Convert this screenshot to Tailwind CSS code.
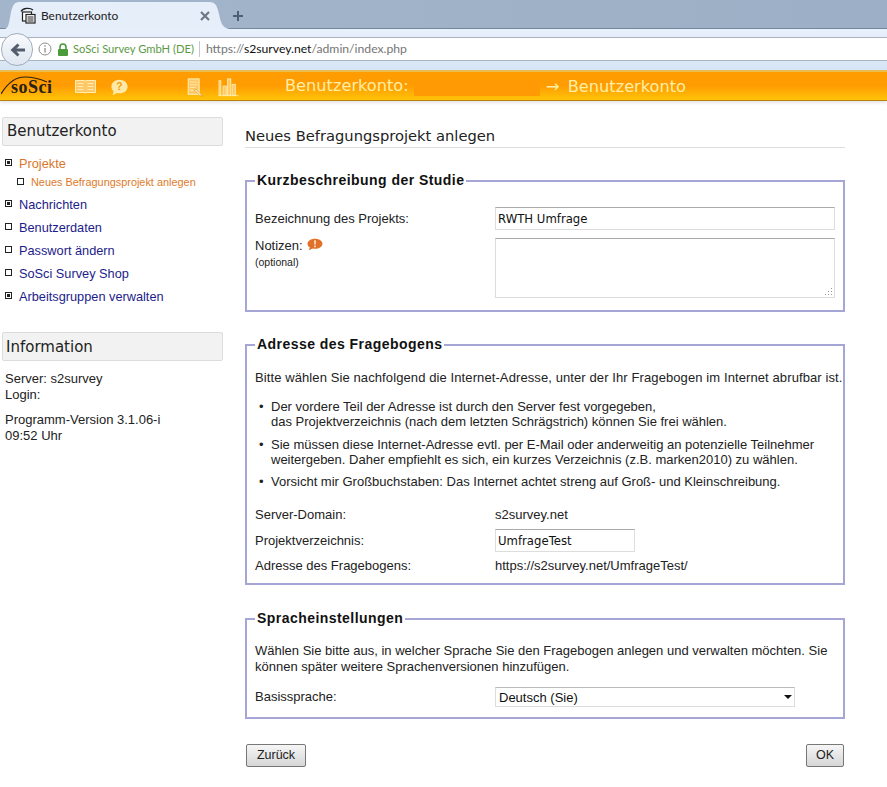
<!DOCTYPE html>
<html lang="de">
<head>
<meta charset="UTF-8">
<title>Benutzerkonto</title>
<script src="https://cdn.jsdelivr.net/npm/@tailwindcss/browser@4"></script>
</head>
<body class="bg-white font-['Liberation_Sans',sans-serif] text-[13px] text-[#222] w-[887px] h-[787px] overflow-hidden">

<!-- browser chrome -->
<div class="h-[29px] bg-gradient-to-r from-[#a3b5ca] via-[#9fb2c8] to-[#9cafc6] border-b border-[#74859c] flex items-end pl-[8px]">
  <div class="relative w-[214px] h-[27px] flex items-center pl-[12px] pr-[12px] -mb-px">
    <svg class="absolute left-[-4px] top-0 w-[226px] h-[27px]" viewBox="0 0 226 27"><path d="M0 27C5 27 5 20 7 10 9 2 11 0 16 0H205C212 0 213 4 215 12 217 22 219 26 226 27Z" fill="#e6eefa"/></svg>
    <svg class="relative w-[17px] h-[17px] shrink-0" viewBox="0 0 17 17" fill="none" stroke="#222" stroke-width="1.2"><path d="M1 4.500C3 .8 10 .5 13 3"/><rect x="2.500" y="5" width="9" height="9" fill="#fff"/><rect x="6" y="7.500" width="9" height="8.500" fill="#fff"/><path d="M7.500 10h6M7.500 12h6M7.500 14h6"/></svg>
    <span class="relative ml-[4px] font-['Lato',sans-serif] text-[11.900px] text-[#222] flex-1">Benutzerkonto</span>
    <svg class="relative w-[10px] h-[10px]" viewBox="0 0 10 10" stroke="#6d7785" stroke-width="2.2"><path d="M1 1l8 8M9 1l-8 8"/></svg>
  </div>
  <svg class="w-[12px] h-[12px] ml-[10px] mb-[6px]" viewBox="0 0 12 12" stroke="#4d5f78" stroke-width="2"><path d="M6 1v10M1 6h10"/></svg>
</div>
<div class="relative h-[41px] bg-gradient-to-b from-[#e8f0fb] to-[#d6e5f5] flex flex-col justify-center">
  <div class="h-[24px] bg-white border-y border-[#a9b3c0] flex items-center pl-[38px] font-['Lato',sans-serif] text-[12.200px] mt-[-1px]">
    <svg class="w-[14px] h-[14px] shrink-0" viewBox="0 0 14 14" fill="none" stroke="#8f8f8f"><circle cx="7" cy="7" r="6"/><path d="M7 6v4.5M7 3.2v1.6" stroke-width="1.3"/></svg>
    <svg class="w-[12px] h-[13px] ml-[5px] shrink-0" viewBox="0 0 12 13"><path d="M3 6V4a3 3 0 016 0v2" fill="none" stroke="#4c9a3a" stroke-width="1.6"/><rect x="1" y="6" width="10" height="7" rx="1" fill="#4c9a3a"/></svg>
    <span class="ml-[4px] text-[11.200px] text-[#5a9a46] whitespace-nowrap">SoSci Survey GmbH (DE)</span>
    <span class="ml-[5px] w-px h-[16px] bg-[#c4c9d0]"></span>
    <span class="ml-[6px] text-[#757575]">https://<span class="text-[#111]">s2survey.net</span>/admin/index.php</span>
  </div>
  <div class="absolute left-[1px] top-[4px] w-[32px] h-[33px] rounded-full bg-gradient-to-b from-[#f8fafd] to-[#dfe7f1] border border-[#a3aebc] flex items-center justify-center">
    <svg class="w-[15px] h-[14px]" viewBox="0 0 15 14" fill="#525e6e"><path d="M7.5 0.5L9.5 2.5 6.5 5.5H15v3H6.5l3 3-2 2L0.5 7z"/></svg>
  </div>
</div>

<!-- orange header -->
<div class="h-[31px] border-t-2 border-t-[#e9bd4f] border-b border-b-[#b97f10] bg-gradient-to-b from-[#ff9c02] from-50% to-[#ffc408] flex items-center relative shadow-[0_2px_3px_#0000001a]">
  <svg class="absolute left-[1px] top-[2px] w-[54px] h-[24px]" viewBox="0 0 54 24" fill="none" stroke="#2a2015" stroke-width="1.2"><path d="M0 20C6 10 14 3 24 3c8 0 15 2 22 5"/></svg>
  <span class="absolute left-[11px] top-[5px] font-['Liberation_Serif',serif] font-bold text-[18px] leading-[20px] text-[#2a2015] tracking-[0.5px]">soSci</span>
  <svg class="absolute left-[75px] top-[8px] w-[21px] h-[14px]" viewBox="0 0 21 14" fill="#ffc766" stroke="#ffeeb0" stroke-width="1"><path d="M.5.5h9.500l.5 1 .5-1h9.500v12h-9.500l-.5 1-.5-1H.5z"/><path d="M2.500 3.500h6M2.500 6.500h6M2.500 9.500h6M12.500 3.500h6M12.500 6.500h6M12.500 9.500h6" stroke-width="1"/></svg>
  <svg class="absolute left-[110px] top-[7px] w-[19px] h-[17px]" viewBox="0 0 21 20"><path d="M10.500 1C5 1 1 4.500 1 9c0 2.200 1 4 2.500 5.300L2.500 19l5-2.600c1 .3 2 .4 3 .4 5.500 0 9.500-3.500 9.500-7.800S16 1 10.500 1z" fill="#ffe9a8"/><text x="10.500" y="13.500" font-family="Liberation Sans" font-weight="700" font-size="12" text-anchor="middle" fill="#f59c0a">?</text></svg>
  <svg class="absolute left-[187px] top-[6px] w-[17px] h-[19px]" viewBox="0 0 18 21" fill="none"><rect x="1" y="1" width="12" height="17" fill="#ffc766" stroke="#ffeeb0" stroke-width="1.200"/><path d="M3 4.500h8M3 7.500h8M3 10.500h6M3 13.500h4" stroke="#ffeeb0"/><path d="M9 12l6 6 2 2-3-.5-6-6z" fill="#fff3c9" stroke="#c9861a" stroke-width=".6"/></svg>
  <svg class="absolute left-[218px] top-[6px] w-[21px] h-[19px]" viewBox="0 0 22 21" fill="#ffc766" stroke="#ffeeb0" stroke-width="1"><rect x=".5" y="3" width="2" height="16"/><rect x="5" y="9" width="3.500" height="10"/><rect x="10" y="1" width="3.500" height="18"/><rect x="15" y="7" width="3.500" height="12"/><path d="M0 19.500h22"/></svg>
  <span class="ml-[285px] mt-[1px] font-['DejaVu_Sans',sans-serif] text-[16.200px] text-[#ffefa6] whitespace-nowrap">Benutzerkonto:</span>
  <span class="absolute left-[414px] top-[8px] w-[126px] h-[16px] bg-[#ff9a05]"></span>
  <span class="absolute left-[546px] top-[3px] font-['DejaVu_Sans',sans-serif] text-[16.200px] text-[#ffefa6] whitespace-nowrap [word-spacing:3px]">→ Benutzerkonto</span>
</div>

<div class="flex items-start">
  <!-- sidebar -->
  <aside class="w-[245px] shrink-0 pl-[2px] pt-[16px]">
    <div class="w-[221px] h-[29px] bg-[#f2f2f2] border border-[#dcdcdc] rounded-[2px] pl-[4px] flex items-center font-['DejaVu_Sans',sans-serif] text-[15px] text-[#222]">Benutzerkonto</div>
    <ul class="mt-[6px] text-[12.750px]">
      <li class="h-[23px] flex items-center pl-[3px] text-[#d9762c]"><span class="w-[7px] h-[7px] border border-[#222] relative mr-[7px] mb-[2px] bg-[linear-gradient(#222,#222)] bg-[length:3px_3px] bg-center bg-no-repeat"></span>Projekte</li>
      <li class="h-[14px] flex items-center pl-[15px] text-[10.900px] text-[#e07a2a] mb-[4px]"><span class="w-[7px] h-[7px] border border-[#222] mr-[7px] mb-[1px]"></span>Neues Befragungsprojekt anlegen</li>
      <li class="h-[23px] flex items-center pl-[3px] text-[#1c1c8a]"><span class="w-[7px] h-[7px] border border-[#222] mr-[7px] mb-[2px] bg-[linear-gradient(#222,#222)] bg-[length:3px_3px] bg-center bg-no-repeat"></span>Nachrichten</li>
      <li class="h-[23px] flex items-center pl-[3px] text-[#1c1c8a]"><span class="w-[7px] h-[7px] border border-[#222] mr-[7px] mb-[2px]"></span>Benutzerdaten</li>
      <li class="h-[23px] flex items-center pl-[3px] text-[#1c1c8a]"><span class="w-[7px] h-[7px] border border-[#222] mr-[7px] mb-[2px]"></span>Passwort ändern</li>
      <li class="h-[23px] flex items-center pl-[3px] text-[#1c1c8a]"><span class="w-[7px] h-[7px] border border-[#222] mr-[7px] mb-[2px]"></span>SoSci Survey Shop</li>
      <li class="h-[23px] flex items-center pl-[3px] text-[#1c1c8a]"><span class="w-[7px] h-[7px] border border-[#222] mr-[7px] mb-[2px] bg-[linear-gradient(#222,#222)] bg-[length:3px_3px] bg-center bg-no-repeat"></span>Arbeitsgruppen verwalten</li>
    </ul>
    <div class="mt-[24px] w-[221px] h-[29px] bg-[#f2f2f2] border border-[#dcdcdc] rounded-[2px] pl-[3px] pt-[1px] flex items-center font-['DejaVu_Sans',sans-serif] text-[15px] text-[#222]">Information</div>
    <div class="mt-[10px] pl-[3px] leading-[15.500px]">
      <p>Server: s2survey</p>
      <p>Login:</p>
      <p class="mt-[10px]">Programm-Version 3.1.06-i</p>
      <p>09:52 Uhr</p>
    </div>
  </aside>

  <!-- main -->
  <main class="w-[600px]">
    <h1 class="mt-[26px] h-[21px] border-b border-[#dddddd] font-['DejaVu_Sans',sans-serif] text-[14.700px] leading-[17px] text-[#222]">Neues Befragungsprojekt anlegen</h1>

    <fieldset class="mt-[25px] h-[139px] border-2 border-[#a5a5d6] px-[8px] pb-0 min-w-0">
      <legend class="font-bold text-[14px] tracking-[0.45px] text-[#111] leading-[15px] px-[2px]">Kurzbeschreibung der Studie</legend>
      <div class="mt-[19px] flex items-center h-[23px]">
        <label class="w-[240px]">Bezeichnung des Projekts:</label>
        <input class="w-[340px] h-[23px] border border-[#ddd] border-t-[#aaa] px-[2px] font-['DejaVu_Sans',sans-serif] text-[11.700px] text-[#111]" value="RWTH Umfrage">
      </div>
      <div class="mt-[8px] flex items-start">
        <div class="w-[240px]">
          <label class="flex items-center gap-[4px] h-[16px]">Notizen:
            <svg class="w-[16px] h-[13px] mb-[4px]" viewBox="0 0 15 12"><path d="M7.500.5C3.500.5.500 2.500.500 5.200c0 1.500.8 2.700 2.200 3.500L1.500 11.500 5.500 9.700c.6.100 1.300.2 2 .2 4 0 7-2 7-4.700S11.500.5 7.500.5z" fill="#e0702a"/><path d="M7.500 2v4M7.500 7v1.500" stroke="#ffe6c9" stroke-width="1.500"/></svg>
          </label>
          <p class="text-[10.500px] leading-[12px] mt-[2px]">(optional)</p>
        </div>
        <div class="relative">
          <textarea class="w-[340px] h-[60px] border border-[#ddd] border-t-[#aaa] block resize-none"></textarea>
          <svg class="absolute right-[2px] bottom-[2px] w-[8px] h-[8px]" viewBox="0 0 8 8" fill="#999"><rect x="6" y="0" width="1" height="1"/><rect x="3" y="3" width="1" height="1"/><rect x="6" y="3" width="1" height="1"/><rect x="0" y="6" width="1" height="1"/><rect x="3" y="6" width="1" height="1"/><rect x="6" y="6" width="1" height="1"/></svg>
        </div>
      </div>
    </fieldset>

    <fieldset class="mt-[25px] h-[248px] border-2 border-[#a5a5d6] px-[8px] min-w-0">
      <legend class="font-bold text-[14px] tracking-[0.45px] text-[#111] leading-[15px] px-[2px]">Adresse des Fragebogens</legend>
      <p class="mt-[19px] leading-[14px] tracking-[0.1px] whitespace-nowrap">Bitte wählen Sie nachfolgend die Internet-Adresse, unter der Ihr Fragebogen im Internet abrufbar ist.</p>
      <ul class="mt-[14px] leading-[15px]">
        <li class="flex"><span class="w-[16px] pl-[4px]">•</span><span>Der vordere Teil der Adresse ist durch den Server fest vorgegeben,<br>das Projektverzeichnis (nach dem letzten Schrägstrich) können Sie frei wählen.</span></li>
        <li class="flex mt-[8px]"><span class="w-[16px] pl-[4px]">•</span><span>Sie müssen diese Internet-Adresse evtl. per E-Mail oder anderweitig an potenzielle Teilnehmer<br>weitergeben. Daher empfiehlt es sich, ein kurzes Verzeichnis (z.B. marken2010) zu wählen.</span></li>
        <li class="flex mt-[7px]"><span class="w-[16px] pl-[4px]">•</span><span>Vorsicht mir Großbuchstaben: Das Internet achtet streng auf Groß- und Kleinschreibung.</span></li>
      </ul>
      <div class="mt-[19px] flex items-center h-[14px]"><span class="w-[240px]">Server-Domain:</span><span>s2survey.net</span></div>
      <div class="mt-[7px] flex items-center h-[23px]"><label class="w-[240px]">Projektverzeichnis:</label><input class="w-[140px] h-[23px] border border-[#ddd] border-t-[#aaa] px-[2px] font-['DejaVu_Sans',sans-serif] text-[11.700px] text-[#111]" value="UmfrageTest"></div>
      <div class="mt-[7px] flex items-center h-[14px]"><span class="w-[240px]">Adresse des Fragebogens:</span><span>https://s2survey.net/UmfrageTest/</span></div>
    </fieldset>

    <fieldset class="mt-[26px] h-[108px] border-2 border-[#a5a5d6] px-[8px] min-w-0">
      <legend class="font-bold text-[14px] tracking-[0.45px] text-[#111] leading-[15px] px-[2px]">Spracheinstellungen</legend>
      <p class="mt-[17px] leading-[16px]">Wählen Sie bitte aus, in welcher Sprache Sie den Fragebogen anlegen und verwalten möchten. Sie können später weitere Sprachenversionen hinzufügen.</p>
      <div class="mt-[12px] flex items-center h-[20px]">
        <label class="w-[240px]">Basissprache:</label>
        <div class="relative">
          <select class="appearance-none w-[300px] h-[20px] border border-[#ddd] border-t-[#bbb] pl-[3px] font-['Liberation_Sans',sans-serif] text-[13px] bg-white text-[#111]"><option>Deutsch (Sie)</option></select>
          <span class="absolute right-[3px] top-[8px] border-x-[4px] border-x-transparent border-t-[4px] border-t-[#111]"></span>
        </div>
      </div>
    </fieldset>

    <div class="mt-[25px] flex justify-between pl-px pr-px">
      <button class="w-[60px] h-[23px] rounded-[2px] border border-[#777] bg-gradient-to-b from-[#f6f6f6] to-[#d6d6d6] text-[12.500px] text-[#222]">Zurück</button>
      <button class="w-[38px] h-[23px] rounded-[2px] border border-[#777] bg-gradient-to-b from-[#f6f6f6] to-[#d6d6d6] text-[12.500px] text-[#222]">OK</button>
    </div>
  </main>
</div>
</body>
</html>
